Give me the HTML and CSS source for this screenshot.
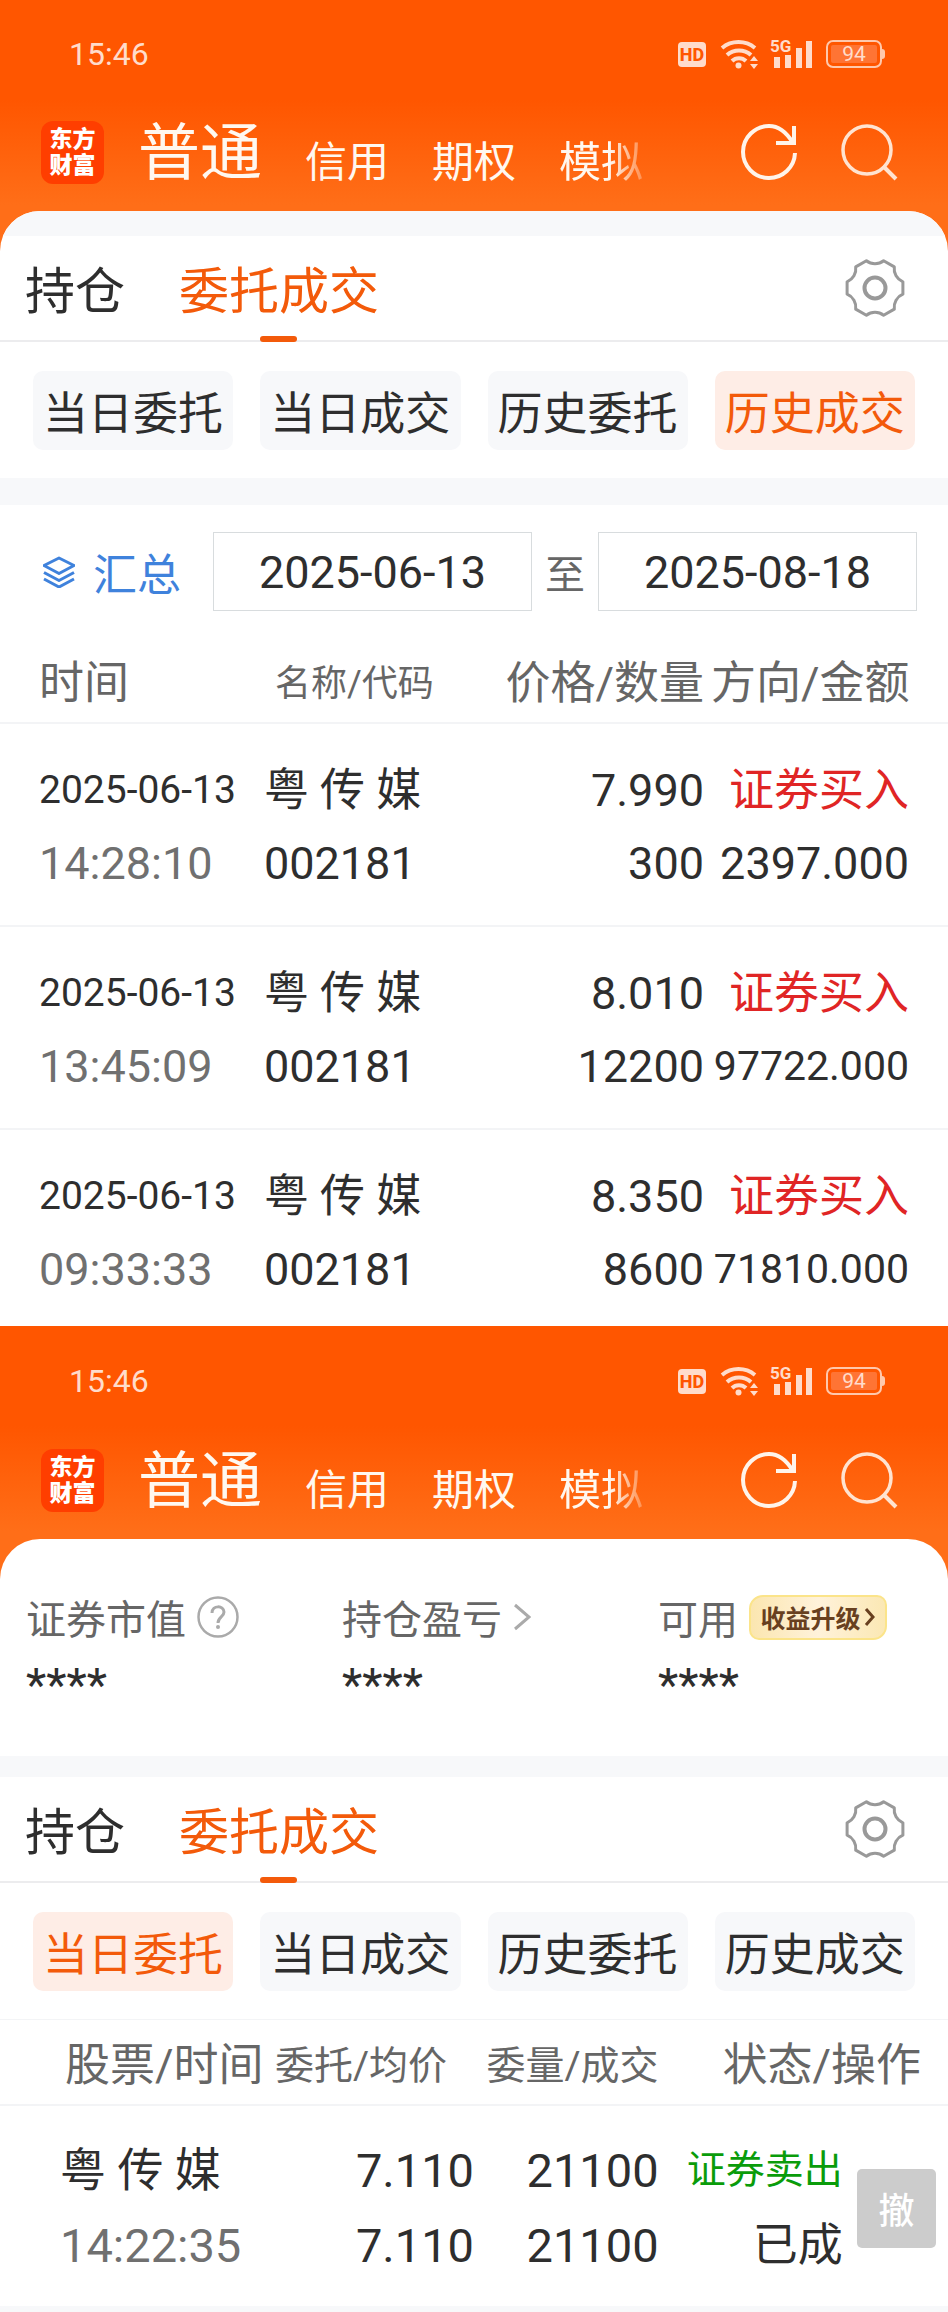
FILE: index.html
```html
<!DOCTYPE html>
<html lang="zh-CN">
<head>
<meta charset="utf-8">
<meta name="viewport" content="width=device-width, initial-scale=1">
<title>东方财富 委托成交</title>
<link rel="stylesheet" href="styles.css">
</head>
<body>
<svg class="defs" aria-hidden="true">
  <symbol id="wifi" viewBox="720 38 38 30">
    <g fill="none" stroke="#ffdccb" stroke-width="4">
      <path d="M722 47a26 26 0 0 1 33 0"/>
      <path d="M727 54a18 18 0 0 1 24 0"/>
      <path d="M732 60a10 10 0 0 1 14 0"/>
    </g>
    <circle cx="738.500" cy="64.500" r="3" fill="#ffdccb"/>
    <path d="M750 60l4-5 4 5zM750 63l4 5 4-5z" fill="#ffdccb"/>
  </symbol>
  <symbol id="bars" viewBox="770 38 42 30">
    <path d="M774 56h6v11h-6zM785 54h6v13h-6zM796 47h6v20h-6zM806 40h6v27h-6z" fill="#ffdccb"/>
  </symbol>
  <symbol id="refresh" viewBox="0 0 58 58">
    <path d="M55 30A26 26 0 1 1 29 3c11 0 18 7 24 17" fill="none" stroke="#fff4ea" stroke-width="4"/>
    <path d="M54 3v17H36" fill="none" stroke="#fff4ea" stroke-width="4"/>
  </symbol>
  <symbol id="search" viewBox="0 0 58 58">
    <circle cx="27" cy="27" r="24" fill="none" stroke="#ffe3d0" stroke-width="3.500"/>
    <path d="M43 43l13 13" fill="none" stroke="#ffe3d0" stroke-width="4"/>
  </symbol>
  <symbol id="gear" viewBox="-30 -30 60 60">
    <path d="M8.600-27.300L19.300-21.100A14 14 0 0 0 27.900-6.200V6.200A14 14 0 0 0 19.300 21.100L8.600 27.300A14 14 0 0 0-8.600 27.300L-19.300 21.100A14 14 0 0 0-27.900 6.200V-6.200A14 14 0 0 0-19.300-21.100L-8.600-27.300A14 14 0 0 0 8.600-27.300Z" fill="none" stroke="#999" stroke-width="3" stroke-linejoin="round"/>
    <circle r="10.500" fill="none" stroke="#999" stroke-width="4"/>
  </symbol>
  <symbol id="layers" viewBox="0 0 32 32">
    <g fill="none" stroke="#3f82dc" stroke-width="3" stroke-linejoin="round">
      <path d="M1 9.500L16 2l15 7.500-15 8z"/>
      <path d="M1 16.500l15 8 15-8"/>
      <path d="M1 23l15 8 15-8"/>
    </g>
  </symbol>
</svg>

<section class="screen">
  <header class="top">
    <div class="status">
      <time>15:46</time>
      <span class="hd">HD</span>
      <svg class="wifi"><use href="#wifi"/></svg>
      <span class="signal"><span class="net">5G</span><svg class="bars"><use href="#bars"/></svg></span>
      <span class="battery"><span class="charge">94</span></span>
    </div>
    <nav class="nav">
      <a class="logo" href="#">东方<br>财富</a>
      <a class="mode mode-on" href="#">普通</a>
      <a class="mode" href="#">信用</a>
      <a class="mode" href="#">期权</a>
      <a class="mode mode-fade" href="#">模拟</a>
      <span class="tools">
        <button class="icon-btn" aria-label="刷新"><svg class="icon-lg"><use href="#refresh"/></svg></button>
        <button class="icon-btn" aria-label="搜索"><svg class="icon-lg"><use href="#search"/></svg></button>
      </span>
    </nav>
  </header>
  <main class="card">
    <div class="band band-top"></div>
    <div class="tabs">
      <button class="tab">持仓</button>
      <button class="tab tab-on">委托成交</button>
      <button class="icon-btn gear" aria-label="设置"><svg class="icon-gear"><use href="#gear"/></svg></button>
    </div>
    <div class="chips">
      <button class="chip">当日委托</button>
      <button class="chip">当日成交</button>
      <button class="chip">历史委托</button>
      <button class="chip chip-on">历史成交</button>
    </div>
    <div class="band band-mid"></div>
    <form class="filter">
      <button type="button" class="summary"><svg class="icon-layers"><use href="#layers"/></svg>汇总</button>
      <input class="date" type="text" aria-label="开始日期" value="2025-06-13">
      <span class="to">至</span>
      <input class="date" type="text" aria-label="结束日期" value="2025-08-18">
    </form>
    <table class="grid deals">
      <colgroup><col class="d1"><col class="d2"><col class="d3"><col class="d4"></colgroup>
      <thead><tr><th>时间</th><th class="th-sm">名称/代码</th><th>价格/数量</th><th>方向/金额</th></tr></thead>
      <tbody>
        <tr>
          <td><span class="line day">2025-06-13</span><span class="line dim">14:28:10</span></td>
          <td><span class="line">粤 传 媒</span><span class="line">002181</span></td>
          <td><span class="line">7.990</span><span class="line">300</span></td>
          <td><span class="line buy">证券买入</span><span class="line">2397.000</span></td>
        </tr>
        <tr>
          <td><span class="line day">2025-06-13</span><span class="line dim">13:45:09</span></td>
          <td><span class="line">粤 传 媒</span><span class="line">002181</span></td>
          <td><span class="line">8.010</span><span class="line">12200</span></td>
          <td><span class="line buy">证券买入</span><span class="line long">97722.000</span></td>
        </tr>
        <tr>
          <td><span class="line day">2025-06-13</span><span class="line dim">09:33:33</span></td>
          <td><span class="line">粤 传 媒</span><span class="line">002181</span></td>
          <td><span class="line">8.350</span><span class="line">8600</span></td>
          <td><span class="line buy">证券买入</span><span class="line long">71810.000</span></td>
        </tr>
      </tbody>
    </table>
  </main>
</section>

<section class="screen screen-today">
  <header class="top">
    <div class="status">
      <time>15:46</time>
      <span class="hd">HD</span>
      <svg class="wifi"><use href="#wifi"/></svg>
      <span class="signal"><span class="net">5G</span><svg class="bars"><use href="#bars"/></svg></span>
      <span class="battery"><span class="charge">94</span></span>
    </div>
    <nav class="nav">
      <a class="logo" href="#">东方<br>财富</a>
      <a class="mode mode-on" href="#">普通</a>
      <a class="mode" href="#">信用</a>
      <a class="mode" href="#">期权</a>
      <a class="mode mode-fade" href="#">模拟</a>
      <span class="tools">
        <button class="icon-btn" aria-label="刷新"><svg class="icon-lg"><use href="#refresh"/></svg></button>
        <button class="icon-btn" aria-label="搜索"><svg class="icon-lg"><use href="#search"/></svg></button>
      </span>
    </nav>
  </header>
  <main class="card">
    <div class="assets">
      <div class="asset">
        <div class="asset-name">证券市值
          <button class="icon-btn" aria-label="说明"><svg class="icon-help" viewBox="0 0 42 42"><circle cx="21" cy="21" r="19.500" fill="none" stroke="#aaa" stroke-width="2.500"/><path d="M15 17c0-8 12-8 12-1 0 5-6 5-6 11" fill="none" stroke="#aaa" stroke-width="3"/><circle cx="21" cy="31" r="2" fill="#aaa"/></svg></button>
        </div>
        <div class="asset-value">****</div>
      </div>
      <div class="asset">
        <div class="asset-name">持仓盈亏
          <svg class="icon-next" viewBox="0 0 18 28"><path d="M2 2l14 12L2 26" fill="none" stroke="#aaa" stroke-width="3"/></svg>
        </div>
        <div class="asset-value">****</div>
      </div>
      <div class="asset">
        <div class="asset-name">可用
          <button class="upgrade">收益升级<svg class="icon-up" viewBox="0 0 12 20"><path d="M2 2l7 8-7 8" fill="none" stroke="#68401f" stroke-width="3"/></svg></button>
        </div>
        <div class="asset-value">****</div>
      </div>
    </div>
    <div class="band band-low"></div>
    <div class="tabs">
      <button class="tab">持仓</button>
      <button class="tab tab-on">委托成交</button>
      <button class="icon-btn gear" aria-label="设置"><svg class="icon-gear"><use href="#gear"/></svg></button>
    </div>
    <div class="chips">
      <button class="chip chip-on">当日委托</button>
      <button class="chip">当日成交</button>
      <button class="chip">历史委托</button>
      <button class="chip">历史成交</button>
    </div>
    <table class="grid orders">
      <colgroup><col class="o1"><col class="o2"><col class="o3"><col class="o4"><col class="o5"></colgroup>
      <thead><tr><th>股票/时间</th><th class="th-md">委托/均价</th><th class="th-md">委量/成交</th><th colspan="2">状态/操作</th></tr></thead>
      <tbody>
        <tr>
          <td><span class="line name">粤 传 媒</span><span class="line dim">14:22:35</span></td>
          <td><span class="line">7.110</span><span class="line">7.110</span></td>
          <td><span class="line">21100</span><span class="line">21100</span></td>
          <td><span class="line sell">证券卖出</span><span class="line done">已成</span></td>
          <td><button class="cancel" disabled>撤</button></td>
        </tr>
      </tbody>
    </table>
    <div class="band band-end"></div>
  </main>
</section>
</body>
</html>
```

FILE: styles.css
```css
* { box-sizing: border-box; }
body {
  margin: 0;
  background: #fff;
  color: #2e2e2e;
  font-family: Roboto, "Noto Sans CJK SC", sans-serif;
  font-size: 45px;
}
button, input { font: inherit; color: inherit; margin: 0; padding: 0; border: 0; background: none; }
a { color: inherit; text-decoration: none; }
svg { display: block; flex: none; }
.defs { position: absolute; width: 0; height: 0; }

/* Header */
.screen { background: linear-gradient(#ff5600 100px, #ff6e18 205px); }
.status {
  display: flex;
  align-items: center;
  height: 108px;
  padding: 0 62px 0 69px;
  color: #ffdccb;
  font-size: 32px;
}
.status time { margin-right: auto; }
.hd {
  width: 28px;
  margin-right: 14px;
  border-radius: 4px;
  background: #ffdccb;
  color: #ff5600;
  font-size: 18px;
  font-weight: 800;
  line-height: 25px;
  text-align: center;
}
.wifi { width: 38px; height: 30px; margin-right: 12px; }
.signal { position: relative; margin-right: 14px; }
.bars { width: 42px; height: 30px; }
.net { position: absolute; left: 0; top: -3px; font-size: 17px; font-weight: 700; line-height: 20px; }
.battery {
  position: relative;
  width: 56px;
  height: 28px;
  margin-right: 4px;
  padding: 3px;
  border: 2px solid #ffc8ac;
  border-radius: 7px;
}
.battery::after {
  content: "";
  position: absolute;
  right: -5px;
  top: 7px;
  width: 3px;
  height: 10px;
  border-radius: 0 3px 3px 0;
  background: #ffc8ac;
}
.charge { display: block; border-radius: 2px; background: #ff7434; font-size: 21px; line-height: 18px; text-align: center; }
.nav { display: flex; align-items: center; height: 103px; padding: 0 50px 15px 41px; color: #fff8f0; }
.logo {
  width: 63px;
  height: 63px;
  margin-right: 34px;
  padding-top: 6px;
  border-radius: 12px;
  background: #ff3e00;
  color: #fff;
  font-size: 23px;
  font-weight: 900;
  line-height: 26px;
  text-align: center;
}
.mode { margin-right: 43px; padding-top: 22px; font-size: 42px; line-height: 62px; white-space: nowrap; }
.mode-on { padding-top: 3px; font-size: 62px; }
.mode-fade {
  margin-right: 0;
  -webkit-mask-image: linear-gradient(90deg, #000 60%, transparent 115%);
  mask-image: linear-gradient(90deg, #000 60%, transparent 115%);
}
.tools { display: flex; gap: 42px; margin-left: auto; }
.icon-btn { display: block; flex: none; }
.icon-lg { width: 58px; height: 58px; }
.screen-today .status { height: 110px; }

/* Card */
.card { overflow: hidden; border-radius: 40px 40px 0 0; background: #fff; }
.band { background: #f7f8fa; }
.band-top { height: 25px; }
.band-mid { height: 27px; }
.band-low { height: 21px; }
.band-end { height: 6px; }

.tabs {
  display: flex;
  align-items: stretch;
  gap: 54px;
  height: 106px;
  padding: 0 43px 0 25px;
  border-bottom: 2px solid #ececee;
}
.tab { position: relative; padding-top: 8px; font-size: 50px; line-height: 96px; white-space: nowrap; }
.tab-on { color: #f35a0a; }
.tab-on::after {
  content: "";
  position: absolute;
  left: 50%;
  bottom: -2px;
  width: 37px;
  height: 6px;
  margin-left: -19px;
  border-radius: 3px;
  background: #f35a0a;
}
.gear { align-self: center; margin-left: auto; }
.icon-gear { width: 60px; height: 60px; }

.chips { display: grid; grid-template-columns: repeat(4, 1fr); gap: 27px; padding: 29px 33px 28px; }
.chip { height: 79px; border-radius: 10px; background: #f7f8fa; white-space: nowrap; }
.chip-on { background: #feede6; color: #f35a0a; }

.filter { display: flex; align-items: center; gap: 13px; padding: 27px 31px 0 43px; }
.summary { display: flex; align-items: center; gap: 18px; margin-right: 19px; color: #3f82dc; font-size: 44px; white-space: nowrap; }
.icon-layers { width: 32px; height: 32px; }
.date { flex: 1; min-width: 0; height: 79px; padding-top: 2px; border: 1px solid #d8dcde; text-align: center; }
.to { color: #666; font-size: 40px; }

/* Tables */
.grid { width: 100%; border-collapse: separate; border-spacing: 0; table-layout: fixed; }
.grid th, .grid td { padding: 0; text-align: right; white-space: nowrap; }
.grid th { border-bottom: 2px solid #f3f4f6; color: #666; font-weight: 400; line-height: 64px; }
.grid .th-sm { font-size: 36px; }
.grid .th-md { font-size: 39px; }
.line { display: block; line-height: 73px; }
.dim { color: #707070; }
.day { font-size: 39px; }
.long { font-size: 41px; }
.buy { color: #e02525; }

.d1 { width: 27%; }
.d2 { width: 21%; }
.d3 { width: 27%; }
.grid.deals th { padding-top: 41px; padding-bottom: 6px; }
.grid.deals td { padding-top: 30px; padding-bottom: 25px; border-bottom: 2px solid #f3f4f6; }
.grid.deals tr:last-child td { padding-bottom: 20px; border-bottom: 0; }
.deals tr > :nth-child(1) { padding-left: 39px; text-align: left; }
.deals tr > :nth-child(2) { padding-left: 8px; text-align: left; }
.deals tr > th:nth-child(2) { padding-left: 19px; }
.deals tr > :nth-child(3) { padding-right: 7px; }
.deals tr > :nth-child(4) { padding-right: 39px; }

.o1 { width: 28%; }
.o2 { width: 22%; }
.o3 { width: 20%; }
.o4 { width: 19%; }
.grid.orders th { padding-top: 14px; padding-bottom: 6px; border-top: 1px solid #f3f4f6; }
.grid.orders td { padding-top: 27px; padding-bottom: 23px; font-size: 47px; }
.orders .line { line-height: 75px; }
.orders .name { font-size: 46px; }
.orders .sell { color: #0a9c0a; font-size: 39px; }
.orders .done { font-size: 45px; }
.orders tr > :nth-child(1) { padding-left: 60px; text-align: left; }
.orders tr > th:nth-child(1) { padding-left: 65px; }
.orders tr > th:nth-child(2) { padding-right: 27px; }
.orders tr > :nth-child(3) { padding-right: 5px; }
.orders tr > :nth-child(4) { padding-right: 1px; }
.orders tr > th:nth-child(4) { padding-right: 27px; }
.orders tr > td:nth-child(5) { padding-right: 12px; }
.cancel { display: block; width: 79px; height: 79px; margin-left: auto; border-radius: 5px; background: #ccc; color: #fff; font-size: 36px; font-weight: 500; }

/* Asset summary */
.assets { display: grid; grid-template-columns: repeat(3, 1fr); height: 217px; padding: 48px 0 0; }
.asset { padding-left: 26px; }
.asset-name { display: flex; align-items: center; gap: 11px; height: 60px; color: #666; font-size: 40px; white-space: nowrap; }
.asset-value { font-size: 47px; line-height: 60px; padding-top: 8px; }
.icon-help { width: 42px; height: 42px; }
.icon-next { width: 18px; height: 28px; }
.upgrade {
  display: flex;
  align-items: center;
  justify-content: center;
  gap: 3px;
  width: 138px;
  height: 45px;
  border: 2px solid #fbe48a;
  border-radius: 14px 10px 14px 10px;
  background: linear-gradient(90deg, #fbe6b0, #fff2da 50%, #fbe8b4);
  color: #68401f;
  font-size: 25px;
  font-weight: 700;
}
.icon-up { width: 12px; height: 20px; }
```
